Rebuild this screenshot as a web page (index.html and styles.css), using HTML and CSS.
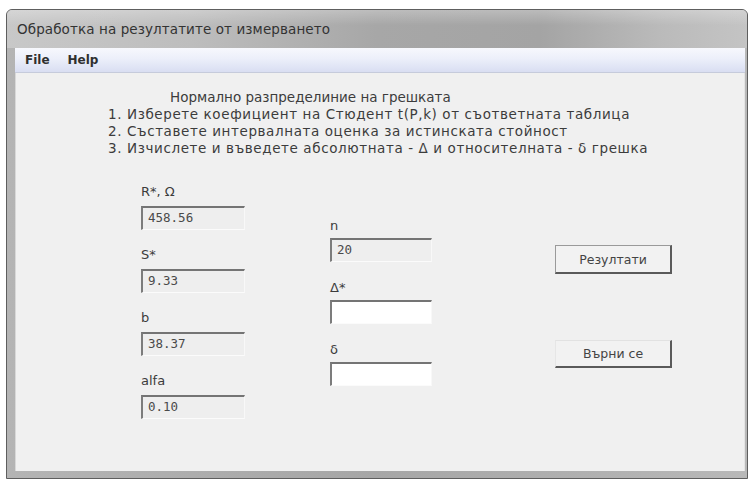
FILE: index.html
```html
<!DOCTYPE html>
<html lang="bg">
<head>
<meta charset="utf-8">
<title>Обработка на резултатите от измерването</title>
<link rel="stylesheet" href="styles.css">
</head>
<body>
<div class="window">
  <div class="titlebar"><span class="title">Обработка на резултатите от измерването</span></div>
  <div class="frame">
    <div class="menubar"><span class="menu-item">File</span><span class="menu-item">Help</span></div>
    <div class="client">
      <div class="instructions">
        <p class="heading">Нормално разпределиние на грешката</p>
        <p>1. Изберете коефициент на Стюдент t(P,k) от съответната таблица</p>
        <p>2. Съставете интервалната оценка за истинската стойност</p>
        <p>3. Изчислете и въведете абсолютната - Δ и относителната - δ грешка</p>
      </div>
      <div class="form">
        <div class="col col-left">
          <div class="field"><label class="label">R*, Ω</label><div class="box readonly">458.56</div></div>
          <div class="field"><label class="label">S*</label><div class="box readonly">9.33</div></div>
          <div class="field"><label class="label">b</label><div class="box readonly">38.37</div></div>
          <div class="field"><label class="label">alfa</label><div class="box readonly">0.10</div></div>
        </div>
        <div class="col col-mid">
          <div class="field"><label class="label">n</label><div class="box readonly">20</div></div>
          <div class="field"><label class="label">Δ*</label><div class="box"></div></div>
          <div class="field"><label class="label">δ</label><div class="box"></div></div>
        </div>
        <div class="col col-buttons">
          <button class="btn btn-results">Резултати</button>
          <button class="btn btn-back">Върни се</button>
        </div>
      </div>
    </div>
  </div>
</div>
</body>
</html>
```
FILE: styles.css
```css
html, body {
  margin: 0;
  padding: 0;
  background: #ffffff;
}

body {
  font-family: "DejaVu Sans", "Liberation Sans", sans-serif;
  color: #3a3a3a;
}

.window {
  margin: 9px 0 0 6px;
  width: 740px;
  height: 468px;
  border: 1px solid #5e5e5e;
  border-radius: 6px 6px 0 0;
  overflow: hidden;
  display: flex;
  flex-direction: column;
  background: #aaaaaa;
}

.titlebar {
  height: 38px;
  flex: none;
  display: flex;
  align-items: center;
  padding-left: 10px;
  background:
    linear-gradient(to bottom, rgba(255,255,255,0.25), rgba(255,255,255,0) 40%),
    linear-gradient(to right, #c8c8c8 0%, #bdbdbd 25%, #a7a7a7 50%, #a4a4a4 72%, #bababa 88%, #c4c4c4 100%);
}

.title {
  font-size: 13.5px;
  letter-spacing: 0.1px;
  color: #333333;
}

.frame {
  flex: 1;
  display: flex;
  flex-direction: column;
  padding: 0 2px 7px 8px;
  background: linear-gradient(to right, #b4b4b4, #a6a6a6 50%, #b8b8b8);
}

.menubar {
  height: 24px;
  flex: none;
  display: flex;
  align-items: center;
  gap: 18px;
  padding-left: 10px;
  background: linear-gradient(to bottom, #f7f8fd 0%, #eceffa 45%, #d9def2 100%);
  border-bottom: 1px solid #c6cbdb;
}

.menu-item {
  font-size: 12px;
  font-weight: bold;
  color: #2f2f2f;
}

.client {
  flex: 1;
  background: #f0f0f0;
  border-left: 1px solid #d8d8d8;
  border-right: 1px solid #e4e4e4;
}

.instructions {
  padding: 16px 0 0 92px;
}

.instructions p {
  margin: 0;
  font-size: 13.5px;
  letter-spacing: 0.6px;
  line-height: 17px;
  color: #3c3c3c;
  white-space: nowrap;
}

.instructions .heading {
  padding-left: 62px;
  letter-spacing: 0;
}

.form {
  display: flex;
  padding: 27px 0 0 125px;
}

.col {
  display: flex;
  flex-direction: column;
}

.col-left {
  width: 104px;
}

.col-mid {
  width: 102px;
  margin-left: 85px;
  padding-top: 34px;
}

.col-buttons {
  width: 117px;
  margin-left: 123px;
  padding-top: 61px;
  gap: 66px;
}

.field {
  display: flex;
  flex-direction: column;
}

.col-left .field {
  margin-bottom: 17px;
}

.col-left .label {
  margin-bottom: 6px;
}

.col-mid .field {
  margin-bottom: 18px;
}

.col-mid .label {
  margin-bottom: 4px;
}

.label {
  font-size: 13px;
  line-height: 16px;
  height: 16px;
  color: #3c3c3c;
}

.box {
  height: 24px;
  box-sizing: border-box;
  border-top: 2px solid #747474;
  border-left: 2px solid #7c7c7c;
  border-right: 1px solid #f8f8f8;
  border-bottom: 1px solid #fbfbfb;
  background: #ffffff;
  font-family: "DejaVu Sans Mono", "Liberation Mono", monospace;
  font-size: 12.5px;
  line-height: 19px;
  padding-left: 5px;
  color: #4a4a4a;
}

.box.readonly {
  background: #eeeeee;
}

.btn {
  font-family: "DejaVu Sans", "Liberation Sans", sans-serif;
  font-size: 12.5px;
  color: #444444;
  background: #f2f2f2;
  height: 29px;
  padding: 0;
  box-sizing: border-box;
  border-top: 1px solid #9a9a9a;
  border-left: 1px solid #9a9a9a;
  border-right: 2px solid #5a5a5a;
  border-bottom: 2px solid #5a5a5a;
}

.btn-back {
  height: 28px;
  border-top-color: #e2e2e2;
  border-left-color: #e6e6e6;
}
```
